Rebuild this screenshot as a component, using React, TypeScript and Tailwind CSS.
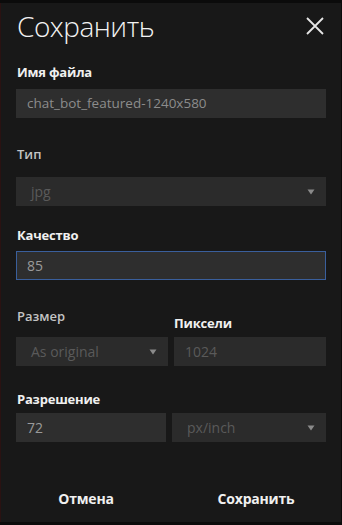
import React from "react";

const Arrow = () => (
  <svg width="8" height="6" viewBox="0 0 8 6" className="shrink-0">
    <path d="M0.5 0.5 L7.5 0.5 L4 5.5 Z" fill="#8a8a8a" />
  </svg>
);

export default function App() {
  const font = { fontFamily: '"Open Sans", "Noto Sans", sans-serif' };
  return (
    <div className="w-[342px] h-[525px] bg-[#0b0b0b] pt-[3px] overflow-hidden" style={font}>
      <div className="h-[519px] w-[341px] bg-[#181818] border-l border-[#2a1212] flex flex-col px-[15px]">
        <div className="flex items-center justify-between h-[46px] pl-[1px]">
          <div className="text-[28px] font-light text-[#f2f2f2] tracking-[-0.5px] leading-none">Сохранить</div>
          <svg width="20" height="20" viewBox="0 0 20 20" className="mr-[1px]">
            <path d="M2 2 L18 18 M18 2 L2 18" stroke="#e6e6e6" strokeWidth="1.8" />
          </svg>
        </div>

        <div className="mt-[15px] h-[16px] text-[13px] font-bold text-[#f0f0f0] leading-[16px] pl-[1px] tracking-[-0.2px]">Имя файла</div>
        <div className="mt-[9px] h-[29px] bg-[#2e2e2e] flex items-center px-[11px] text-[13.5px] text-[#8c8c8c]">
          chat_bot_featured-1240x580
        </div>

        <div className="mt-[28px] h-[16px] text-[13px] font-semibold text-[#c4c4c4] leading-[16px] pl-[1px]">Тип</div>
        <div className="mt-[15px] h-[29px] bg-[#2b2b2b] flex items-center justify-between pl-[15px] pr-[11px] text-[14px] text-[#5a5a5a]">
          <span>jpg</span>
          <Arrow />
        </div>

        <div className="mt-[21px] h-[16px] text-[13px] font-bold text-[#f0f0f0] leading-[16px] pl-[1px] tracking-[-0.2px]">Качество</div>
        <div className="mt-[8px] h-[29px] bg-[#2e2e2e] border border-[#3a5f9c] flex items-center px-[10px] text-[14px] text-[#9a9a9a]">
          85
        </div>

        <div className="mt-[28px] flex gap-[6px]">
          <div className="flex-1 flex flex-col">
            <div className="h-[16px] text-[13px] font-semibold text-[#c4c4c4] leading-[16px] pl-[1px]">Размер</div>
            <div className="mt-[13px] h-[29px] bg-[#2b2b2b] flex items-center justify-between pl-[15px] pr-[11px] text-[14px] text-[#5a5a5a]">
              <span>As original</span>
              <Arrow />
            </div>
          </div>
          <div className="flex-1 flex flex-col">
            <div className="mt-[7px] h-[16px] text-[13px] font-bold text-[#f0f0f0] leading-[16px] tracking-[-0.2px]">Пиксели</div>
            <div className="mt-[6px] h-[29px] bg-[#2b2b2b] flex items-center px-[11px] text-[14px] text-[#5a5a5a]">
              1024
            </div>
          </div>
        </div>

        <div className="mt-[25px] h-[16px] text-[13px] font-bold text-[#f0f0f0] leading-[16px] pl-[1px] tracking-[-0.2px]">Разрешение</div>
        <div className="mt-[6px] flex gap-[6px]">
          <div className="flex-1 h-[29px] bg-[#2e2e2e] flex items-center px-[11px] text-[14px] text-[#9a9a9a]">72</div>
          <div className="flex-1 h-[29px] bg-[#2b2b2b] flex items-center justify-between pl-[15px] pr-[11px] text-[14px] text-[#5a5a5a]">
            <span>px/inch</span>
            <Arrow />
          </div>
        </div>

        <div className="mt-[47px] flex justify-between">
          <div className="w-[140px] text-center text-[14px] font-bold text-[#f0f0f0] leading-[20px] tracking-[-0.2px]">Отмена</div>
          <div className="w-[140px] text-center text-[14px] font-bold text-[#f0f0f0] leading-[20px] tracking-[-0.2px]">Сохранить</div>
        </div>
      </div>
    </div>
  );
}
